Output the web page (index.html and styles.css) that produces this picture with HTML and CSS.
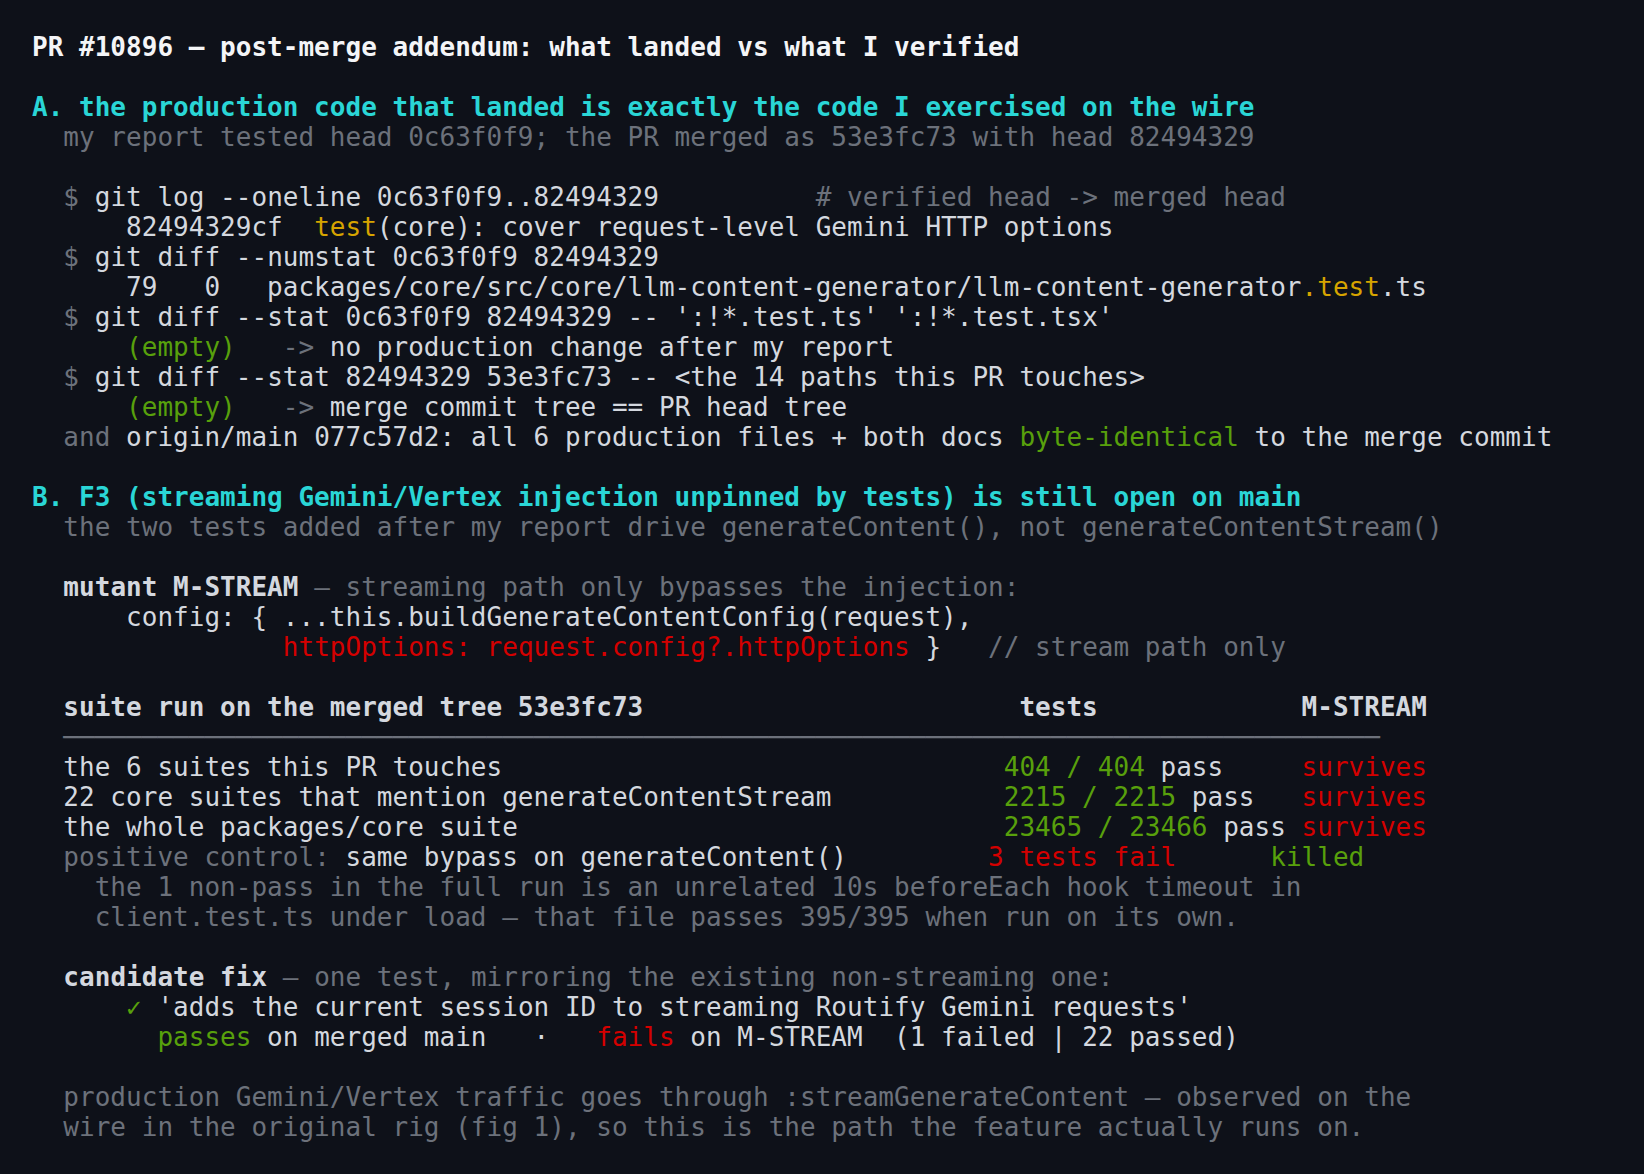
FILE: index.html
```html
<!DOCTYPE html>
<html>
<head>
<meta charset="utf-8">
<link rel="stylesheet" href="styles.css">
</head>
<body>
<main class="term">
<div class="ln b wh">PR #10896 — post-merge addendum: what landed vs what I verified</div>
<div class="ln"> </div>
<div class="ln b cy">A. the production code that landed is exactly the code I exercised on the wire</div>
<div class="ln dim">  my report tested head 0c63f0f9; the PR merged as 53e3fc73 with head 82494329</div>
<div class="ln"> </div>
<div class="ln">  <span class="dim">$</span> git log --oneline 0c63f0f9..82494329          <span class="dim"># verified head -&gt; merged head</span></div>
<div class="ln">      82494329cf  <span class="ye">test</span>(core): cover request-level Gemini HTTP options</div>
<div class="ln">  <span class="dim">$</span> git diff --numstat 0c63f0f9 82494329</div>
<div class="ln">      79   0   packages/core/src/core/llm-content-generator/llm-content-generator<span class="ye">.test</span>.ts</div>
<div class="ln">  <span class="dim">$</span> git diff --stat 0c63f0f9 82494329 -- ':!*.test.ts' ':!*.test.tsx'</div>
<div class="ln">      <span class="gr">(empty)</span>   <span class="dim">-&gt;</span> no production change after my report</div>
<div class="ln">  <span class="dim">$</span> git diff --stat 82494329 53e3fc73 -- &lt;the 14 paths this PR touches&gt;</div>
<div class="ln">      <span class="gr">(empty)</span>   <span class="dim">-&gt;</span> merge commit tree == PR head tree</div>
<div class="ln">  <span class="dim">and</span> origin/main 077c57d2: all 6 production files + both docs <span class="gr">byte-identical</span> to the merge commit</div>
<div class="ln"> </div>
<div class="ln b cy">B. F3 (streaming Gemini/Vertex injection unpinned by tests) is still open on main</div>
<div class="ln dim">  the two tests added after my report drive generateContent(), not generateContentStream()</div>
<div class="ln"> </div>
<div class="ln">  <span class="b">mutant M-STREAM</span><span class="dim"> — streaming path only bypasses the injection:</span></div>
<div class="ln">      config: { ...this.buildGenerateContentConfig(request),</div>
<div class="ln">                <span class="re">httpOptions: request.config?.httpOptions</span> }   <span class="dim">// stream path only</span></div>
<div class="ln"> </div>
<div class="ln b">  suite run on the merged tree 53e3fc73                        tests             M-STREAM</div>
<div class="ln rule">  ────────────────────────────────────────────────────────────────────────────────────</div>
<div class="ln">  the 6 suites this PR touches                                <span class="gr">404 / 404</span> pass     <span class="re">survives</span></div>
<div class="ln">  22 core suites that mention generateContentStream           <span class="gr">2215 / 2215</span> pass   <span class="re">survives</span></div>
<div class="ln">  the whole packages/core suite                               <span class="gr">23465 / 23466</span> pass <span class="re">survives</span></div>
<div class="ln">  <span class="dim">positive control:</span> same bypass on generateContent()         <span class="re">3 tests fail</span>      <span class="gr">killed</span></div>
<div class="ln dim">    the 1 non-pass in the full run is an unrelated 10s beforeEach hook timeout in</div>
<div class="ln dim">    client.test.ts under load — that file passes 395/395 when run on its own.</div>
<div class="ln"> </div>
<div class="ln">  <span class="b">candidate fix</span><span class="dim"> — one test, mirroring the existing non-streaming one:</span></div>
<div class="ln">      <span class="gr">✓</span> 'adds the current session ID to streaming Routify Gemini requests'</div>
<div class="ln">        <span class="gr">passes</span> on merged main   ·   <span class="re">fails</span> on M-STREAM  (1 failed | 22 passed)</div>
<div class="ln"> </div>
<div class="ln dim">  production Gemini/Vertex traffic goes through :streamGenerateContent — observed on the</div>
<div class="ln dim">  wire in the original rig (fig 1), so this is the path the feature actually runs on.</div>
</main>
</body>
</html>
```

FILE: styles.css
```css
html, body {
  margin: 0;
  padding: 0;
  background: #0e1119;
}
body {
  width: 1644px;
  height: 1174px;
  overflow: hidden;
}
.term {
  display: flex;
  flex-direction: column;
  padding: 32px 0 0 32px;
  font-family: "DejaVu Sans Mono", "Liberation Mono", monospace;
  font-size: 26px;
  line-height: 30px;
  letter-spacing: 0.02px;
  color: #d4d8df;
}
.ln {
  white-space: pre;
  height: 30px;
}
.b { font-weight: bold; }
.wh { color: #f4f5f7; }
.cy { color: #2ad6d6; }
.dim { color: #6c717b; }
.ye { color: #d6a400; }
.gr { color: #58a00c; }
.re { color: #d40000; }
.rule { color: #6c717b; }
```
